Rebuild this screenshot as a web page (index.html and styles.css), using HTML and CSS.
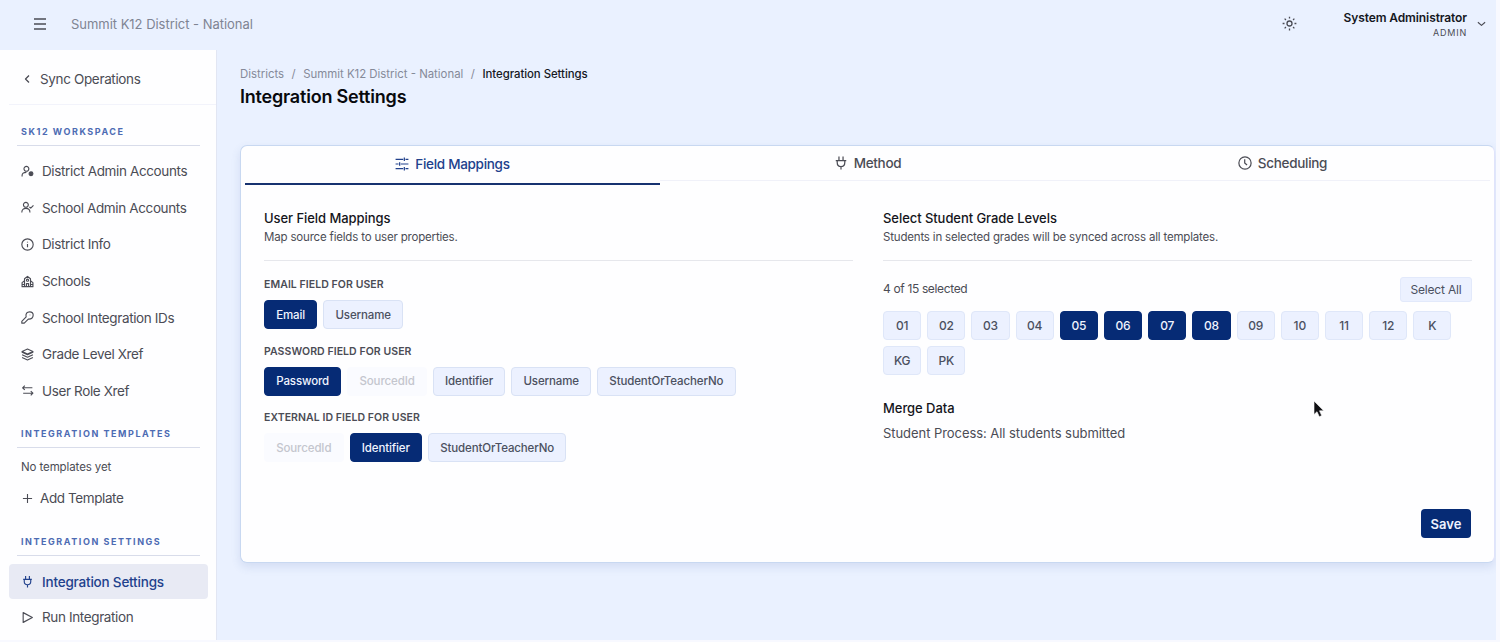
FILE: index.html
```html
<!DOCTYPE html>
<html lang="en">
<head>
  <meta charset="UTF-8">
  <meta name="viewport" content="width=device-width, initial-scale=1.0">
  <title>Integration Settings</title>
  <link rel="stylesheet" href="styles.css">
</head>
<body>
  <div class="app">
    <header class="topbar">
      <svg class="icon menu-icon" viewBox="0 0 14 14"><path d="M1 2h12M1 7h12M1 12h12"/></svg>
      <span class="district">Summit K12 District - National</span>
      <svg class="icon sun-icon" viewBox="0 0 24 24"><circle cx="12" cy="12" r="4"/><path d="M12 1v3M12 20v3M1 12h3M20 12h3M4.2 4.2l2.1 2.1M17.7 17.7l2.1 2.1M4.2 19.8l2.1-2.1M17.7 6.3l2.1-2.1"/></svg>
      <div class="user">
        <div class="user-name">System Administrator</div>
        <div class="user-role">ADMIN</div>
      </div>
      <svg class="icon chevron-icon" viewBox="0 0 10 6"><path d="M1 1l4 3.5L9 1"/></svg>
    </header>

    <div class="layout">
      <aside class="sidebar">
        <a class="back">
          <svg class="icon back-icon" viewBox="0 0 6 10"><path d="M5 1.5L1.5 5 5 8.5"/></svg>
          Sync Operations
        </a>

        <h2 class="nav-title first">SK12 WORKSPACE</h2>
        <nav class="nav">
          <a class="nav-item">
            <svg class="icon" viewBox="0 0 24 24"><circle cx="10" cy="7" r="4.5"/><path d="M2 21v-1.5c0-4 3-6 8-6"/><circle class="fill" cx="18.5" cy="16" r="3.5"/></svg>
            <span>District Admin Accounts</span>
          </a>
          <a class="nav-item">
            <svg class="icon" viewBox="0 0 24 24"><circle cx="9" cy="7" r="4.5"/><path d="M1.5 21c0-5 3-7.5 7.5-7.5s7.5 2.500 7.500 7.500M15.500 11l2.500 2 5-5"/></svg>
            <span>School Admin Accounts</span>
          </a>
          <a class="nav-item">
            <svg class="icon" viewBox="0 0 24 24"><circle cx="12" cy="12" r="10.500"/><path d="M12 11v6M12 7v1.500"/></svg>
            <span>District Info</span>
          </a>
          <a class="nav-item">
            <svg class="icon" viewBox="0 0 24 24"><path d="M6.500 21V7L12 2.500 17.500 7v14M6 11l-4 3v7.500h20V14l-4-3M10 21v-5h4v5M2 17.500h4M18 17.500h4"/><circle cx="12" cy="9.500" r="2"/></svg>
            <span>Schools</span>
          </a>
          <a class="nav-item">
            <svg class="icon" viewBox="0 0 24 24"><path d="M9.500 11C8 5 11 1.500 16 1.500c4 0 6.500 2.500 6.500 6 0 5-3.500 8-9 7.500L6 22.500H1.500V19zM16.500 7v1"/></svg>
            <span>School Integration IDs</span>
          </a>
          <a class="nav-item">
            <svg class="icon" viewBox="0 0 24 24"><path d="M12 2l10 4.500L12 11 2 6.500zM2 6.500V8l10 4.500L22 8V6.500M2 12.500L12 17l10-4.500M2 17.500L12 22l10-4.500"/></svg>
            <span>Grade Level Xref</span>
          </a>
          <a class="nav-item">
            <svg class="icon" viewBox="0 0 24 24"><path d="M21 7H3M7 3L3 7l4 4M4 17h18M18 13l4 4-4 4"/></svg>
            <span>User Role Xref</span>
          </a>
        </nav>

        <h2 class="nav-title">INTEGRATION TEMPLATES</h2>
        <p class="empty">No templates yet</p>
        <a class="add">
          <svg class="icon add-icon" viewBox="0 0 12 12"><path d="M6 1v10M1 6h10"/></svg>
          Add Template
        </a>

        <h2 class="nav-title settings">INTEGRATION SETTINGS</h2>
        <nav class="nav">
          <a class="nav-item active">
            <svg class="icon" viewBox="0 0 24 24"><path d="M8.500 2v6M15.500 2v6M4 8h16M6 8v4c0 3.500 2.500 6 6 6s6-2.500 6-6V8M12 18v5"/></svg>
            <span>Integration Settings</span>
          </a>
          <a class="nav-item">
            <svg class="icon" viewBox="0 0 24 24"><path d="M4 3v18l17-9z"/></svg>
            <span>Run Integration</span>
          </a>
        </nav>
      </aside>

      <main class="content">
        <div class="breadcrumb">
          <a>Districts</a><span class="sep">/</span><a>Summit K12 District - National</a><span class="sep">/</span><strong>Integration Settings</strong>
        </div>
        <h1 class="page-title">Integration Settings</h1>

        <section class="card">
          <div class="tabs">
            <a class="tab active">
              <svg class="icon" viewBox="0 0 24 24"><path d="M1 4h13M18 4h5M16 1v6M1 12h5M10 12h13M8 9v6M1 20h13M18 20h5M16 17v6"/></svg>
              Field Mappings
            </a>
            <a class="tab">
              <svg class="icon" viewBox="0 0 24 24"><path d="M8.500 1v6M15.500 1v6M3 8h18M5.500 8v3c0 4 2.500 7 6.500 7s6.500-3 6.500-7V8M12 18v5"/></svg>
              Method
            </a>
            <a class="tab">
              <svg class="icon" viewBox="0 0 24 24"><circle cx="12" cy="12" r="10.500"/><path d="M11.500 5.500V12l4 3.500"/></svg>
              Scheduling
            </a>
          </div>

          <div class="panels">
            <div class="panel">
              <div class="panel-head">
                <h3>User Field Mappings</h3>
                <p>Map source fields to user properties.</p>
              </div>
              <div class="field">
                <h4>EMAIL FIELD FOR USER</h4>
                <div class="chips">
                  <button class="chip selected">Email</button>
                  <button class="chip">Username</button>
                </div>
              </div>
              <div class="field">
                <h4>PASSWORD FIELD FOR USER</h4>
                <div class="chips">
                  <button class="chip selected">Password</button>
                  <button class="chip disabled">SourcedId</button>
                  <button class="chip">Identifier</button>
                  <button class="chip">Username</button>
                  <button class="chip">StudentOrTeacherNo</button>
                </div>
              </div>
              <div class="field">
                <h4>EXTERNAL ID FIELD FOR USER</h4>
                <div class="chips">
                  <button class="chip disabled">SourcedId</button>
                  <button class="chip selected">Identifier</button>
                  <button class="chip">StudentOrTeacherNo</button>
                </div>
              </div>
            </div>

            <div class="panel">
              <div class="panel-head">
                <h3>Select Student Grade Levels</h3>
                <p>Students in selected grades will be synced across all templates.</p>
              </div>
              <div class="grade-bar">
                <span>4 of 15 selected</span>
                <button class="select-all">Select All</button>
              </div>
              <div class="grades">
                <button class="grade">01</button>
                <button class="grade">02</button>
                <button class="grade">03</button>
                <button class="grade">04</button>
                <button class="grade selected">05</button>
                <button class="grade selected">06</button>
                <button class="grade selected">07</button>
                <button class="grade selected">08</button>
                <button class="grade">09</button>
                <button class="grade">10</button>
                <button class="grade">11</button>
                <button class="grade">12</button>
                <button class="grade">K</button>
                <button class="grade">KG</button>
                <button class="grade">PK</button>
              </div>
              <h3 class="merge-title">Merge Data</h3>
              <p class="merge-text">Student Process: All students submitted</p>
            </div>
          </div>

          <div class="actions">
            <button class="save">Save</button>
          </div>
        </section>
      </main>
    </div>
  </div>

  <svg class="cursor" viewBox="0 0 12 18"><path d="M1 1v13.500l3-2.800 2.300 5 2.400-1.100-2.200-4.800h4.200z"/></svg>
</body>
</html>
```
FILE: styles.css
```css
* {
  box-sizing: border-box;
}

body {
  margin: 0;
  height: 642px;
  overflow: hidden;
  background: #f8f9ff;
  font-family: Inter, "Liberation Sans", sans-serif;
  color: #4b4c55;
}

h1, h2, h3, h4, p {
  margin: 0;
}

button {
  font-family: inherit;
  padding: 0;
}

.app {
  width: 1496px;
  height: 640px;
  overflow: hidden;
  background: #eaf1ff;
}

.icon {
  flex: none;
  width: 13px;
  height: 13px;
  fill: none;
  stroke: currentColor;
  stroke-width: 2.1;
  stroke-linejoin: round;
}

.icon .fill {
  fill: currentColor;
}

/* Top bar */
.topbar {
  display: flex;
  align-items: center;
  height: 50px;
  padding: 0 10px 3px 33px;
}

.menu-icon {
  width: 14px;
  height: 14px;
  stroke-width: 1.4;
}

.district {
  margin-left: 24px;
  padding-top: 1px;
  font-size: 13px;
  letter-spacing: -0.03px;
  color: #7f8493;
}

.sun-icon {
  width: 15px;
  height: 15px;
  margin-left: auto;
}

.user {
  width: 124px;
  margin-left: 46px;
  padding-top: 2px;
  text-align: right;
  white-space: nowrap;
}

.user-name {
  font-size: 12px;
  line-height: 15px;
  font-weight: 600;
  letter-spacing: -0.1px;
  color: #15171e;
}

.user-role {
  font-size: 9px;
  line-height: 15px;
  letter-spacing: 0.8px;
}

.chevron-icon {
  width: 9px;
  height: 6px;
  margin-left: 10px;
  stroke-width: 1.3;
}

.layout {
  display: flex;
  height: 590px;
}

/* Sidebar */
.sidebar {
  width: 217px;
  flex: none;
  background: #fefeff;
  border-right: 1px solid #e2e6f3;
  overflow: hidden;
}

.back {
  display: flex;
  align-items: center;
  height: 55px;
  margin-left: 9px;
  padding: 4px 0 0 15px;
  gap: 10px;
  border-bottom: 1px solid #f2f3fb;
  font-size: 13.5px;
  letter-spacing: -0.35px;
}

.back-icon {
  width: 6px;
  height: 10px;
  stroke-width: 1.3;
}

.nav-title {
  height: 22px;
  margin: 17px 16px 6px 17px;
  padding-left: 4px;
  border-bottom: 1px solid #d8dcea;
  font-size: 9px;
  line-height: 15px;
  font-weight: 700;
  letter-spacing: 1.55px;
  color: #4d6bb3;
  white-space: nowrap;
}

.nav-title.first {
  margin-top: 19px;
}

.nav-title.settings {
  margin-top: 18px;
  margin-bottom: 8px;
}

.nav {
  padding: 0 8px 0 9px;
}

.nav-title.first + .nav {
  padding-top: 1px;
}

.nav-item {
  display: flex;
  align-items: center;
  gap: 8px;
  height: 36.6px;
  padding-left: 12px;
  border-radius: 4px;
  font-size: 13.5px;
  letter-spacing: -0.37px;
  white-space: nowrap;
}

.nav-item.active {
  height: 35px;
  background: #e8eaf4;
  color: #21418c;
  font-weight: 500;
  letter-spacing: -0.2px;
}

.empty {
  padding-left: 21px;
  font-size: 11.5px;
  letter-spacing: -0.1px;
  line-height: 26px;
}

.add {
  display: flex;
  align-items: center;
  height: 36px;
  padding-left: 22px;
  gap: 7px;
  font-size: 13.5px;
  letter-spacing: -0.4px;
}

.add-icon {
  width: 11px;
  height: 11px;
  stroke-width: 1.2;
}

/* Main content */
.content {
  flex: 1;
  padding: 16px 0 0 23px;
}

.breadcrumb {
  display: flex;
  height: 17px;
  font-size: 11.4px;
  line-height: 17px;
  color: #858a99;
}

.breadcrumb .sep {
  margin: 0 7.5px;
}

.breadcrumb strong {
  font-weight: 500;
  letter-spacing: -0.05px;
  color: #16181f;
}

.page-title {
  font-size: 18px;
  line-height: 28px;
  font-weight: 600;
  letter-spacing: -0.2px;
  color: #08090d;
}

.card {
  width: 1255px;
  height: 418px;
  margin-top: 34px;
  padding: 0 4px;
  background: #fefeff;
  border: 1px solid #c8d8f1;
  border-right-color: #e0e3fb;
  border-radius: 7px;
  box-shadow: 0 4px 10px rgba(70, 100, 170, 0.14);
}

.tabs {
  display: flex;
  height: 39px;
}

.tab {
  flex: 1;
  display: flex;
  align-items: center;
  justify-content: center;
  gap: 6px;
  height: 35px;
  border-bottom: 1px solid #f0f1f9;
  font-size: 13.5px;
  font-weight: 500;
  letter-spacing: -0.3px;
}

.tab .icon {
  width: 14px;
  height: 14px;
}

.tab.active {
  height: 39px;
  padding-bottom: 2px;
  border-bottom: 2px solid #173270;
  color: #21418c;
}

.panels {
  display: grid;
  grid-template-columns: 589px 589px;
  gap: 30px;
  height: 313px;
  padding: 23px 0 0 19px;
}

.panel-head {
  height: 53px;
  border-bottom: 1px solid #e6e7ec;
}

h3 {
  font-size: 13px;
  line-height: 20px;
  font-weight: 500;
  letter-spacing: -0.06px;
  color: #14151b;
}

.panel-head p {
  font-size: 11.5px;
  line-height: 18px;
  letter-spacing: -0.18px;
}

.field {
  height: 66.7px;
}

.panel-head + .field {
  margin-top: 14px;
}

h4 {
  height: 25px;
  font-size: 10.5px;
  line-height: 20px;
  font-weight: 600;
  letter-spacing: 0.07px;
}

.chips {
  display: flex;
  gap: 6px;
}

.chip {
  height: 29px;
  padding: 0 11.2px;
  border: 1px solid #d9e2f5;
  border-radius: 4px;
  background: #ecf1ff;
  font-size: 11.5px;
  font-weight: 500;
  letter-spacing: -0.12px;
  color: #4b5060;
}

.chip.selected,
.grade.selected {
  border-color: #062b75;
  background: #062b75;
  color: #f0f4ff;
}

.chip.disabled {
  border-color: #fafbff;
  background: #fafbff;
  color: #c4c6ce;
}

.grade-bar {
  display: flex;
  justify-content: space-between;
  height: 25px;
  margin-top: 16px;
  font-size: 12px;
  line-height: 23px;
  letter-spacing: -0.35px;
}

.select-all {
  width: 72px;
  height: 25px;
  border: 1px solid #e2e9fb;
  border-radius: 3px;
  background: #ecf1ff;
  font-size: 12px;
  letter-spacing: -0.2px;
  color: #4b5060;
}

.grades {
  display: flex;
  flex-wrap: wrap;
  gap: 6px;
  margin-top: 9px;
}

.grade {
  width: 38.2px;
  height: 29px;
  border: 1px solid #dfe7f9;
  border-radius: 4px;
  background: #ecf1ff;
  font-size: 12px;
  font-weight: 500;
  letter-spacing: -0.2px;
  color: #4b5060;
}

.merge-title {
  margin-top: 23px;
}

.merge-text {
  margin-top: 5px;
  font-size: 13px;
  line-height: 20px;
  letter-spacing: -0.06px;
}

.actions {
  display: flex;
  justify-content: flex-end;
  padding: 11px 19px 0 0;
}

.save {
  width: 50px;
  height: 29px;
  border: 0;
  border-radius: 4px;
  background: #062b75;
  color: #eef2ff;
  font-size: 13px;
  font-weight: 600;
}

/* Mouse pointer over the page */
.cursor {
  position: absolute;
  left: 1313px;
  top: 400px;
  width: 12px;
  height: 18px;
  fill: #101014;
  stroke: #fff;
  stroke-width: 0.6;
}
```
